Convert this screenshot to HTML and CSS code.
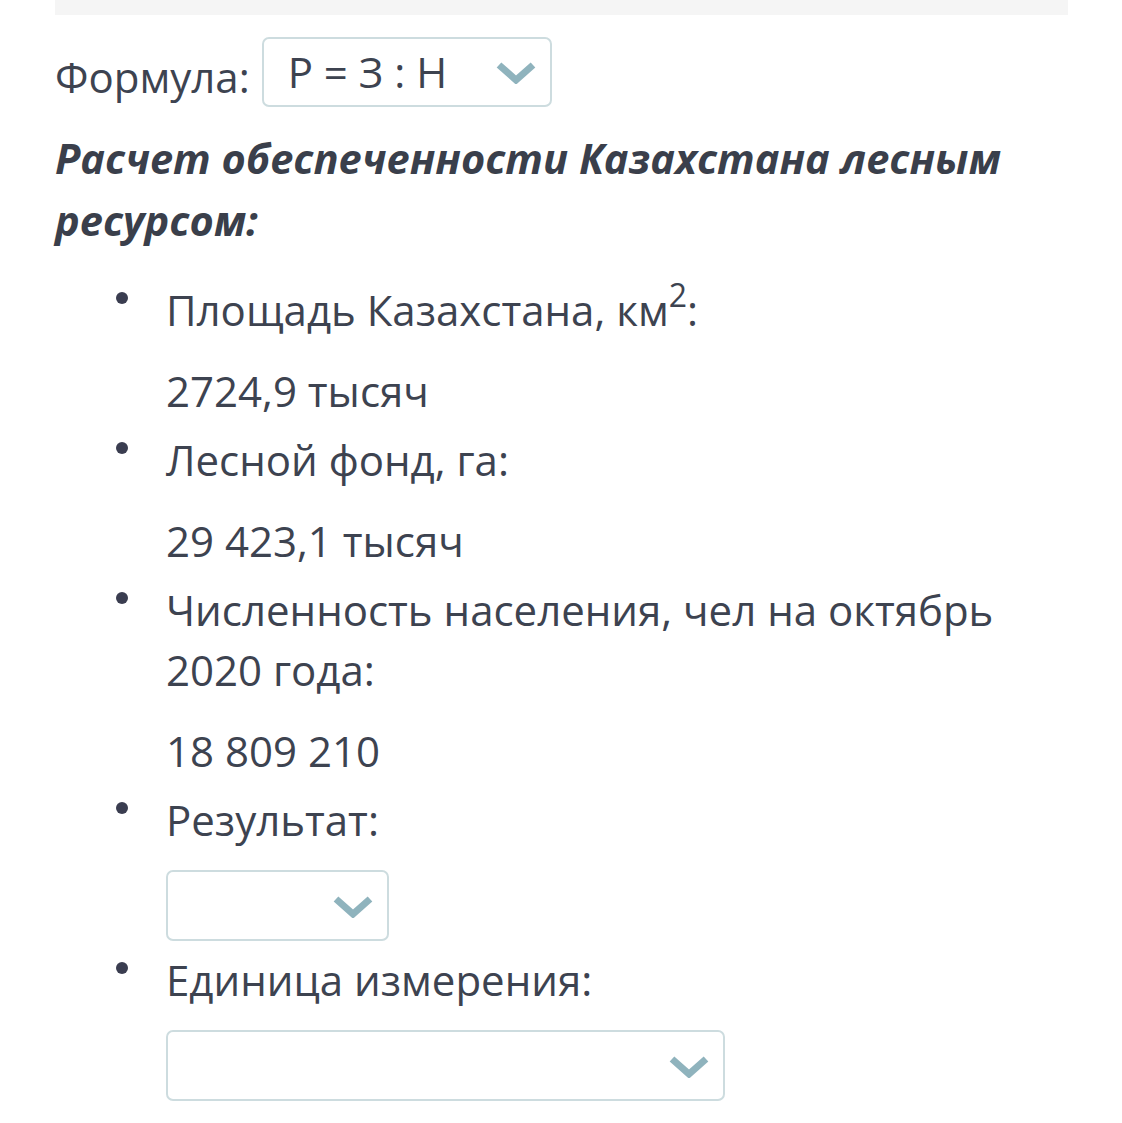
FILE: index.html
```html
<!DOCTYPE html>
<html lang="ru">
<head>
  <meta charset="UTF-8">
  <meta name="viewport" content="width=device-width, initial-scale=1.0">
  <title>Расчет обеспеченности</title>
  <link rel="stylesheet" href="styles.css">
</head>
<body>
  <div class="container">
    <div class="top-band"></div>

    <div class="formula-row">
      <span class="formula-label">Формула:</span>
      <div class="select select-formula">
        <span class="select-value">Р = З : Н</span>
        <svg class="chevron" viewBox="0 0 40 22" width="40" height="22"><polyline points="3,3 20,18 37,3" fill="none" stroke="#8fb3bd" stroke-width="7"/></svg>
      </div>
    </div>

    <h2 class="task-title">Расчет обеспеченности Казахстана лесным ресурсом:</h2>

    <ul class="data-list">
      <li>
        <div class="item">
          <p class="label">Площадь Казахстана, км<sup>2</sup>:</p>
          <p class="value">2724,9 тысяч</p>
        </div>
      </li>
      <li>
        <div class="item">
          <p class="label">Лесной фонд, га:</p>
          <p class="value">29 423,1 тысяч</p>
        </div>
      </li>
      <li>
        <div class="item">
          <p class="label">Численность населения, чел на октябрь 2020 года:</p>
          <p class="value">18 809 210</p>
        </div>
      </li>
      <li>
        <div class="item">
          <p class="label">Результат:</p>
          <div class="select select-small">
            <span class="select-value"></span>
            <svg class="chevron" viewBox="0 0 40 22" width="40" height="22"><polyline points="3,3 20,18 37,3" fill="none" stroke="#8fb3bd" stroke-width="7"/></svg>
          </div>
        </div>
      </li>
      <li>
        <div class="item">
          <p class="label">Единица измерения:</p>
          <div class="select select-wide">
            <span class="select-value"></span>
            <svg class="chevron" viewBox="0 0 40 22" width="40" height="22"><polyline points="3,3 20,18 37,3" fill="none" stroke="#8fb3bd" stroke-width="7"/></svg>
          </div>
        </div>
      </li>
    </ul>
  </div>
</body>
</html>
```

FILE: styles.css
```css
body { margin: 0; background: #fff; font-family: "Open Sans", "Noto Sans", sans-serif; color: #3d4350; }
.container { padding: 0 54px 0 55px; }
.top-band { height: 15px; background: #f5f5f5; }

.formula-row { display: flex; align-items: center; gap: 12px; margin-top: 22px; }
.formula-label { font-size: 42px; line-height: 60px; margin-top: 10px; }

.select { box-sizing: border-box; height: 71px; border: 2px solid #cddcdf; border-radius: 7px; display: flex; align-items: center; justify-content: space-between; padding: 0 14px 0 24px; background: #fff; }
.select-value { font-size: 42px; line-height: 60px; }
.select-formula { width: 290px; height: 70px; }
.select-small { width: 223px; margin-top: 20px; }
.select-wide { width: 559px; margin-top: 20px; }
.chevron { display: block; margin-top: 2px; }

.task-title { margin: 20px 0 0; font-size: 41.6px; line-height: 62px; font-weight: 700; font-style: italic; color: #3a3f4b; }

.data-list { list-style: none; margin: 29px 0 0; padding: 0 0 0 61px; }
.data-list li { display: flex; margin-bottom: 9px; }
.data-list li::before { content: ""; flex: none; width: 12px; height: 12px; border-radius: 50%; background: #3a3d50; margin: 12px 38px 0 0; }
.item { flex: 1; }
.label, .value { margin: 0; font-size: 42px; line-height: 60px; }
.value { margin-top: 21px; }
.label sup { font-size: 32px; line-height: 0; vertical-align: 19px; }
```
